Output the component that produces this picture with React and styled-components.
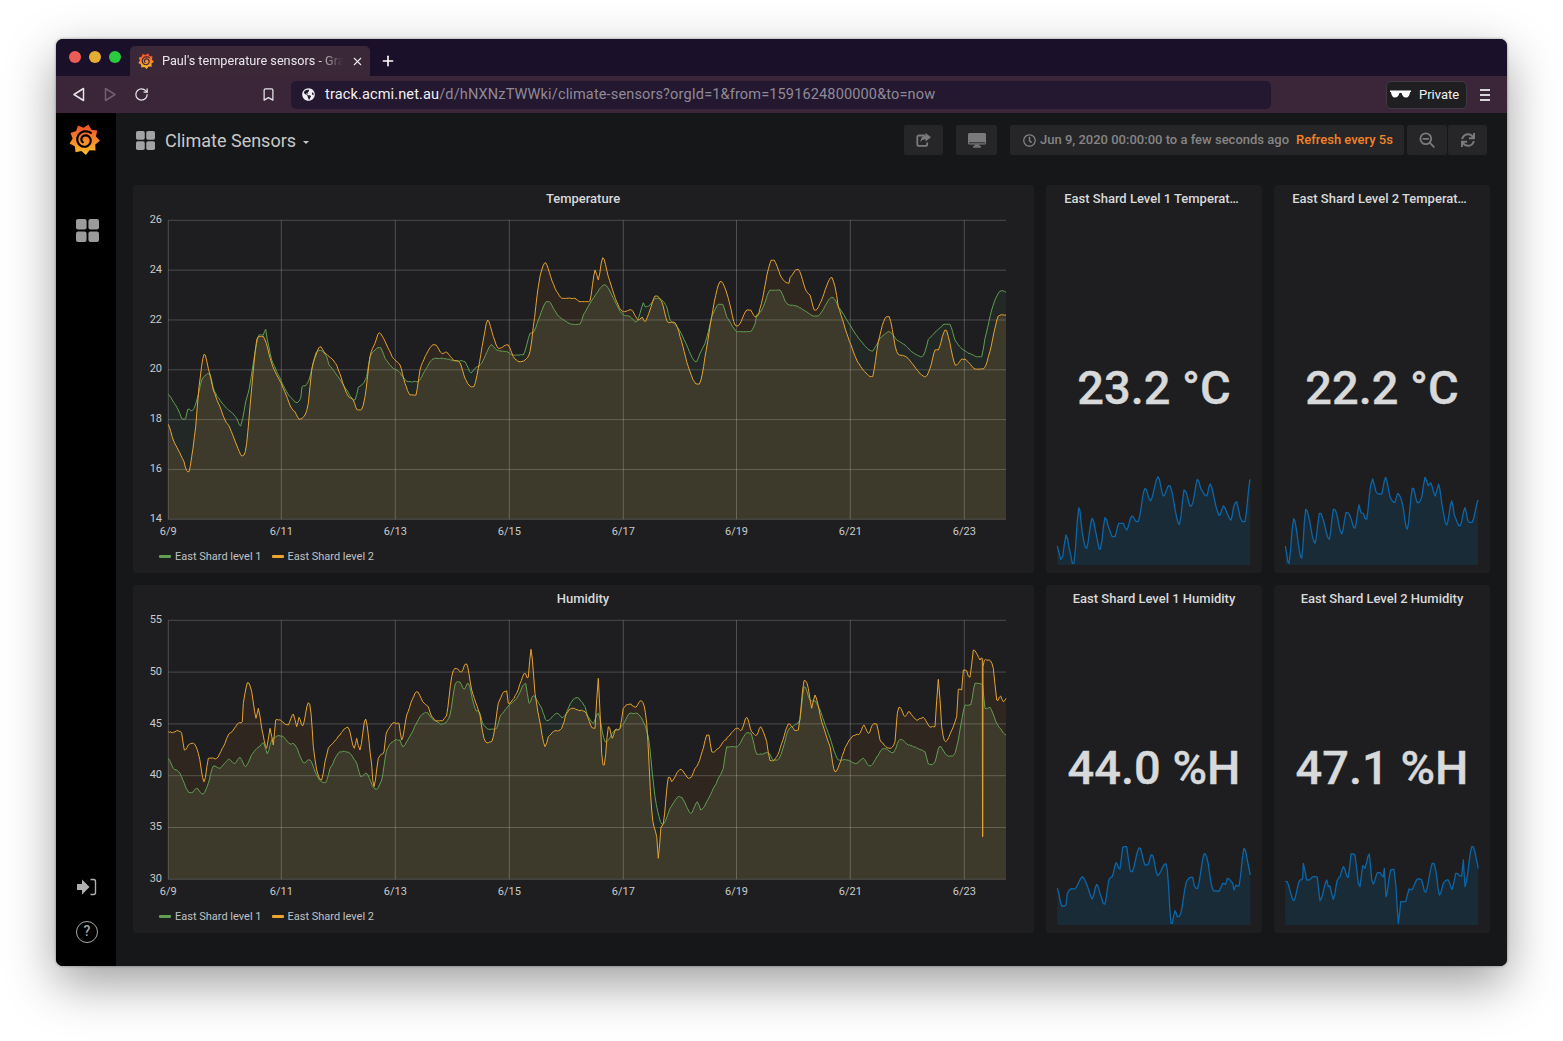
import React from 'react';
import styled, { createGlobalStyle } from 'styled-components';
import { FaGlobeAmericas, FaRegClock, FaSync } from 'react-icons/fa';
import { RotateCw, Bookmark, X, Plus } from 'lucide-react';

const Global = createGlobalStyle`
  html, body { margin: 0; padding: 0; background: #fff; width: 1563px; height: 1041px; overflow: hidden; }
  * { box-sizing: border-box; }
  body { font-family: Roboto, "Liberation Sans", sans-serif; }
`;

const tempGreen = ["115,643 130,665 145,690 157,717 167,716 173,688 187,692 197,672 207,635 215,600 225,587 240,581 250,625 262,650 285,680 305,697 320,715 332,738 338,715 347,665 358,625 368,560 380,490 388,464 400,465 407,448 412,480 425,540 440,575 470,635 490,660 502,668 512,655 516,620 525,618 537,600 547,560 558,518 575,512 590,530 597,555 620,585 650,630 675,660 685,622 695,615 710,590 720,530 735,510 752,503 765,535 790,565 805,573 825,598 835,605 865,605 880,580 905,540 925,535 940,535 975,542 1005,545 1015,565 1022,578 1035,565 1055,550 1070,518 1083,494 1100,510 1130,515 1150,525 1180,525 1190,495 1200,460 1210,458 1225,420 1245,370 1258,365 1270,385 1285,408 1310,425 1325,433 1350,433",
  "10,405 30,370 50,340 70,315 80,318 100,355 125,400 150,410 170,425 180,400 190,368 195,380 210,375 225,355 245,360 260,380 270,420 295,445 320,495 340,538 350,545 360,520 375,490 385,455 395,410 415,373 428,373 440,410 470,455 512,455 525,432 530,405 545,390 570,330 600,330 620,370 650,378 680,395 700,408 715,408 755,352 775,380 810,435 840,480 875,513 890,495 900,475 925,455 935,460 950,480 975,495 995,515 1025,530 1035,515 1045,478 1085,440 1092,433 1110,433 1125,480 1150,510 1180,525 1205,530 1215,475 1235,390 1255,340 1268,332 1278,337"];
const tempOrange = ["115,733 130,780 145,810 162,845 170,872 177,875 185,830 197,740 207,620 222,523 235,565 250,630 270,680 285,720 300,745 320,795 335,828 342,825 350,790 360,680 370,570 380,480 395,470 405,480 425,550 440,585 460,625 485,685 495,695 507,718 525,705 535,670 545,570 558,525 570,500 585,520 610,540 625,570 650,640 670,660 682,690 695,688 705,650 720,530 735,490 748,458 770,495 790,535 810,555 825,610 840,645 858,645 870,570 885,530 905,497 918,495 935,520 950,517 970,540 990,548 1005,595 1020,618 1032,620 1045,565 1060,480 1073,420 1090,470 1105,505 1135,495 1150,530 1167,545 1185,540 1200,515 1210,440 1225,320 1235,270 1247,248 1262,290 1275,325 1295,355 1310,355 1335,355 1350,365",
  "30,362 45,270 55,300 68,233 85,290 110,365 130,395 155,390 175,420 187,412 195,425 210,390 225,348 245,365 262,425 285,428 300,470 325,560 348,612 362,603 375,530 395,410 415,315 425,305 445,355 465,435 475,437 500,390 512,390 525,410 540,385 570,250 582,240 605,293 627,310 630,293 655,268 680,335 690,345 703,390 720,370 752,293 765,320 775,380 800,460 830,540 870,590 878,590 895,485 915,415 928,410 950,515 980,532 1033,590 1050,565 1065,510 1075,510 1095,450 1105,470 1122,545 1130,555 1145,537 1155,537 1185,567 1210,567 1225,530 1255,408 1278,405"];
const humGreen = ["115,475 130,505 150,520 172,570 185,578 200,565 220,582 235,550 250,498 270,505 295,478 315,490 330,472 347,500 368,460 385,442 402,430 412,462 425,420 455,408 480,432 495,435 520,488 540,480 560,525 575,545 587,548 600,505 630,455 660,460 680,490 692,530 710,520 735,567 755,540 770,450 795,420 810,420 818,440 850,390 870,350 890,338 905,355 940,372 960,345 975,255 990,246 1003,268 1015,250 1035,325 1048,335 1060,375 1080,388 1100,385 1110,350 1135,318 1160,295 1187,250 1197,310 1210,287 1235,325 1250,362 1280,340 1300,352 1325,305 1342,293 1350,300",
  "15,320 22,345 40,370 55,340 75,425 100,395 120,385 150,340 175,342 205,410 225,590 245,672 255,665 270,625 295,590 310,600 332,640 352,605 362,630 380,605 400,565 430,505 440,440 472,440 500,398 515,405 530,462 565,458 580,480 600,470 625,390 660,360 672,260 690,300 710,310 745,400 775,480 800,480 830,490 850,475 870,498 910,445 940,458 960,418 985,435 1035,455 1045,492 1065,485 1078,440 1100,465 1118,468 1130,440 1155,315 1172,315 1185,250 1208,256 1215,325 1230,322 1250,370 1278,405"];
const humOrange = ["115,395 130,397 140,392 155,400 163,450 175,435 190,430 205,460 222,545 235,475 260,475 285,430 295,405 310,390 325,370 337,365 340,310 352,248 365,275 378,355 385,325 395,385 410,445 420,385 430,435 437,360 475,375 490,342 500,380 507,352 518,378 535,308 543,340 550,440 560,510 575,540 585,485 595,445 630,405 655,383 673,445 680,415 690,450 707,357 725,495 732,560 745,475 762,455 768,403 785,372 807,370 815,420 830,345 860,275 878,305 895,320 905,350 925,362 950,345 965,230 975,205 995,215 1010,192 1025,270 1050,345 1062,415 1075,428 1090,410 1105,310 1130,272 1135,310 1160,280 1183,220 1195,232 1203,148 1215,280 1232,378 1245,440 1255,410 1270,395 1295,385 1310,340 1325,325 1350,332",
  "15,335 45,385 55,235 65,460 73,495 85,380 97,415 105,390 120,385 130,325 150,312 165,322 185,303 200,370 215,630 230,710 235,775 243,680 250,670 265,532 275,545 300,508 325,535 335,530 345,505 355,490 370,445 380,405 387,405 395,455 420,440 430,425 470,385 485,390 500,352 515,395 530,405 542,380 560,425 570,482 590,470 605,430 625,372 640,385 655,390 672,242 685,265 695,325 705,285 725,365 750,440 765,515 800,435 820,407 840,400 852,375 865,400 880,372 890,372 900,420 930,445 945,425 952,340 960,322 975,350 985,335 1010,360 1030,352 1045,375 1065,380 1075,238 1085,380 1097,425 1120,380 1130,350 1135,268 1145,270 1150,210 1160,212 1170,232 1180,150 1200,180 1207,175 1207.5,710 1208.5,710 1209,200 1228,180 1240,205 1250,300 1262,288 1270,305 1278,295"];

const spark1 = "52,318 62,358 68,350 78,285 92,345 102,370 116,203 127,280 140,325 156,235 170,290 181,328 195,233 205,260 217,290 225,290 236,250 250,250 260,270 275,228 295,245 314,146 332,182 354,110 370,168 390,137 418,254 432,150 438,155 450,198 458,190 472,118 482,145 500,168 511,132 532,212 540,225 550,198 573,240 580,205 590,185 600,230 615,245 630,118";
const spark2 = "736,318 747,370 761,236 785,355 797,208 825,310 838,220 848,235 868,298 880,208 888,215 905,282 918,218 930,228 945,265 957,195 963,218 970,220 980,238 992,135 998,117 1008,155 1025,162 1037,112 1050,170 1065,187 1073,160 1087,190 1102,268 1117,145 1132,188 1145,172 1155,112 1165,138 1172,128 1186,168 1196,133 1207,200 1220,255 1235,183 1243,225 1260,258 1275,203 1283,240 1297,247 1314,180";
const spark3 = "52,205 65,258 78,255 82,220 92,207 107,205 117,185 127,170 137,185 147,212 157,237 170,193 185,235 195,252 207,178 217,170 228,128 240,147 248,82 260,80 270,150 277,155 298,83 315,135 325,133 333,105 340,110 345,137 353,167 375,132 382,150 393,310 405,272 412,290 422,282 438,190 458,172 463,197 473,205 492,102 500,110 517,205 538,213 548,190 557,193 562,175 578,190 582,210 588,195 597,198 612,85 625,135 631,165";
const spark4 = "736,185 742,185 750,212 762,242 777,185 788,175 790,130 800,180 820,170 832,172 840,242 860,180 865,200 870,198 880,238 892,180 900,170 910,140 925,172 933,102 945,105 955,190 960,200 968,137 975,145 988,102 995,180 1000,192 1012,158 1020,158 1030,170 1033,145 1038,230 1045,190 1052,150 1062,148 1068,200 1075,310 1082,245 1097,245 1107,207 1115,210 1132,177 1145,180 1157,217 1177,130 1187,150 1198,225 1210,190 1225,180 1237,208 1247,160 1265,168 1270,120 1275,200 1295,80 1305,97 1315,145";

const toPage = (s, ox, oy) => s.split(' ').map(p => {
  const [x, y] = p.split(',').map(Number);
  return [ox + x / 3, oy + y / 3];
});
const ptStr = pts => pts.map(p => `${p[0].toFixed(1)},${p[1].toFixed(1)}`).join(' ');

// Rounds the traced points and adds a little sampling noise, as the real series has.
const densify = (pts, amp, seed) => {
  const out = [pts[0]];
  const noise = i => {
    const v = Math.sin((i + seed) * 12.9898) * 43758.5453;
    return (v - Math.floor(v) - 0.5) * 2 * amp;
  };
  let n = 0;
  for (let i = 0; i < pts.length - 1; i++) {
    const p0 = pts[Math.max(0, i - 1)];
    const p1 = pts[i];
    const p2 = pts[i + 1];
    const p3 = pts[Math.min(pts.length - 1, i + 2)];
    const steps = Math.max(1, Math.round((p2[0] - p1[0]) / 1.4));
    const lo = Math.min(p1[1], p2[1]);
    const hi = Math.max(p1[1], p2[1]);
    for (let s = 1; s <= steps; s++) {
      const t = s / steps;
      const t2 = t * t;
      const t3 = t2 * t;
      let y = 0.5 * (2 * p1[1] + (p2[1] - p0[1]) * t + (2 * p0[1] - 5 * p1[1] + 4 * p2[1] - p3[1]) * t2 + (3 * p1[1] - p0[1] - 3 * p2[1] + p3[1]) * t3);
      y = Math.min(hi, Math.max(lo, y));
      const x = p1[0] + (p2[0] - p1[0]) * t;
      out.push([x, s === steps ? y : y + noise(n++)]);
    }
  }
  return out;
};

const Page = styled.div`
  width: 1563px;
  height: 1041px;
  padding: 39px 56px 75px;
`;
const Window = styled.div`
  width: 1451px;
  height: 927px;
  display: flex;
  flex-direction: column;
  border-radius: 7px;
  overflow: hidden;
  background: #161719;
  box-shadow: 0 18px 50px rgba(0, 0, 0, 0.38), 0 0 3px rgba(0, 0, 0, 0.4);
`;
const TitleBar = styled.div`
  height: 37px;
  flex: none;
  background: #1a102a;
  display: flex;
  align-items: flex-end;
  padding-left: 13px;
`;
const Lights = styled.div`
  display: flex;
  gap: 8px;
  align-self: flex-start;
  margin-top: 12px;
  width: 61px;
`;
const Light = styled.span`
  width: 12px;
  height: 12px;
  border-radius: 50%;
  background: ${p => p.$c};
`;
const Tab = styled.div`
  width: 240px;
  height: 30px;
  background: #3a2738;
  border-radius: 5px 5px 0 0;
  display: flex;
  align-items: center;
  padding: 0 6px 0 8px;
  gap: 8px;
  color: #e8e6ea;
  font-size: 12.7px;
`;
const TabText = styled.span`
  flex: 1;
  white-space: nowrap;
  overflow: hidden;
  height: 18px;
  line-height: 18px;
  -webkit-mask-image: linear-gradient(to right, #000 86%, transparent 100%);
  mask-image: linear-gradient(to right, #000 86%, transparent 100%);
`;
const NewTab = styled.span`
  display: flex;
  margin: 0 0 7px 10px;
  color: #fff;
`;
const NavBar = styled.div`
  height: 37px;
  flex: none;
  background: #3a2638;
  display: flex;
  align-items: center;
  padding: 0 0 0 16px;
  color: #e6e3e8;
`;
const NavIcon = styled.span`
  display: flex;
  width: ${p => p.$w}px;
  color: ${p => p.$c || '#e6e3e8'};
`;
const AddressBar = styled.div`
  width: 980px;
  height: 28px;
  border-radius: 5px;
  background: #241730;
  display: flex;
  align-items: center;
  padding-left: 11px;
  gap: 10px;
  font-size: 14.55px;
  color: #8f8a97;
  margin-right: 115px;
  letter-spacing: 0.125px;
`;
const Host = styled.span`
  color: #f1eff3;
`;
const PrivatePill = styled.div`
  width: 81px;
  height: 28px;
  background: #1f1f22;
  border: 1px solid #3f3a42;
  border-radius: 5px;
  display: flex;
  align-items: center;
  padding-left: 3px;
  gap: 8px;
  color: #f1f1f1;
  font-size: 13px;
  margin-right: 13px;
`;
const Burger = styled.div`
  display: flex;
  flex-direction: column;
  gap: 3px;
  width: 10px;
  span { height: 2px; background: #d8d4da; display: block; }
`;
const Body = styled.div`
  flex: 1;
  display: flex;
  min-height: 0;
`;
const Sidebar = styled.nav`
  width: 60px;
  flex: none;
  background: #000;
  display: flex;
  flex-direction: column;
  align-items: center;
  padding: 11px 0 23px;
  color: #9a9a9a;
`;
const LogoSlot = styled.div`
  margin: 0 3px 0 0;
  display: flex;
  height: 32px;
`;
const SideGrid = styled.div`
  margin: 63px 0 0 2px;
  display: flex;
`;
const SideBottom = styled.div`
  margin: auto 0 0 2px;
  display: flex;
  flex-direction: column;
  align-items: center;
  gap: 25px;
`;
const Help = styled.div`
  width: 22px;
  height: 22px;
  border-radius: 50%;
  border: 1.5px solid #a8a8a8;
  color: #a8a8a8;
  font-size: 14px;
  font-weight: 500;
  line-height: 19px;
  text-align: center;
`;
const Main = styled.main`
  flex: 1;
  padding: 12px 17px 0;
  background: #161719;
`;
const Header = styled.header`
  height: 30px;
  margin-bottom: 30px;
  padding: 0 3px;
  display: flex;
  align-items: center;
`;
const DashTitle = styled.div`
  display: flex;
  align-items: center;
  font-size: 18px;
  color: #c8c8c8;
  gap: 10px;
  margin-right: auto;
`;
const Caret = styled.span`
  width: 0;
  height: 0;
  border-left: 3.5px solid transparent;
  border-right: 3.5px solid transparent;
  border-top: 3.5px solid #c8c8c8;
  margin: 5px 0 0 -3px;
`;
const ToolBtn = styled.div`
  width: ${p => p.$w}px;
  height: 30px;
  margin-left: ${p => p.$gap}px;
  background: #262628;
  border-radius: 2px;
  display: flex;
  align-items: center;
  justify-content: center;
  color: #7a7a7a;
`;
const TimeBtn = styled(ToolBtn)`
  justify-content: flex-start;
  padding: 0 0 2px 13px;
  gap: 4px;
  font-size: 13px;
  font-weight: 500;
  color: #858585;
  white-space: nowrap;
  svg { margin-top: 2px; }
`;
const Refresh = styled.span`
  color: #f2832b;
  margin-left: 3px;
`;
const Grid = styled.div`
  display: grid;
  grid-template-columns: 901px 216px 216px;
  grid-template-rows: 388px 348px;
  gap: 12px;
`;
const Panel = styled.section`
  position: relative;
  background: #1e1e20;
  border-radius: 3px;
  display: flex;
  flex-direction: column;
`;
const PanelTitle = styled.h2`
  margin: 0;
  height: 28px;
  flex: none;
  line-height: 28px;
  text-align: center;
  font-size: 13px;
  font-weight: 500;
  color: #d8d9da;
  padding-right: ${p => p.$shift || 0}px;
`;
const Plot = styled.svg`
  display: block;
  flex: none;
  font-family: Roboto, "Liberation Sans", sans-serif;
`;
const Legend = styled.div`
  display: flex;
  height: 22px;
  align-items: center;
  padding-left: 26px;
  gap: 10px;
  font-size: 11px;
  color: #c0c1c3;
  margin-top: 2px;
`;
const LegendItem = styled.span`
  display: flex;
  align-items: center;
  gap: 4px;
  &::before {
    content: '';
    width: 12px;
    height: 3px;
    border-radius: 1px;
    background: ${p => p.$c};
  }
`;
const StatValue = styled.div`
  flex: 1;
  display: flex;
  align-items: center;
  justify-content: center;
  padding-bottom: 12px;
  font-size: 47px;
  font-weight: 500;
  -webkit-text-stroke: 0.4px #d8d9da;
  color: #d8d9da;
  white-space: nowrap;
`;
const Spark = styled.svg`
  position: absolute;
  left: 11px;
  bottom: 8px;
  overflow: visible;
`;

function GrafanaLogo({ size, id, swirl }) {
  const teeth = 9;
  const pts = [];
  for (let i = 0; i < teeth * 2; i++) {
    const a = (i / (teeth * 2)) * Math.PI * 2 - Math.PI / 2.4;
    const r = i % 2 === 0 ? 15 : 11.5;
    pts.push(`${(15 + r * Math.cos(a)).toFixed(2)},${(15 + r * Math.sin(a)).toFixed(2)}`);
  }
  let spiral = '';
  for (let t = 0; t <= 1; t += 0.03) {
    const a = Math.PI * 0.75 + t * Math.PI * 3;
    const r = 3 + t * 6;
    spiral += `${t === 0 ? 'M' : 'L'}${(15.5 + r * Math.cos(a)).toFixed(2)} ${(15.5 + r * Math.sin(a)).toFixed(2)} `;
  }
  return (
    <svg width={size} height={size} viewBox="0 0 30 30">
      <defs>
        <linearGradient id={id} x1="0" y1="0" x2="0" y2="1">
          <stop offset="0" stopColor="#ef4a2b" />
          <stop offset="1" stopColor="#fcc02c" />
        </linearGradient>
      </defs>
      <polygon points={pts.join(' ')} fill={`url(#${id})`} />
      <path d={spiral} fill="none" stroke={swirl} strokeWidth="2.1" strokeLinecap="round" />
    </svg>
  );
}

function Squares({ size, color }) {
  const g = size * 0.08;
  const s = (size - g) / 2;
  const r = size * 0.09;
  return (
    <svg width={size} height={size} viewBox={`0 0 ${size} ${size}`} fill={color}>
      <rect x="0" y="0" width={s} height={s} rx={r} />
      <rect x={s + g} y="0" width={s} height={s} rx={r} />
      <rect x="0" y={s + g} width={s} height={s} rx={r} />
      <rect x={s + g} y={s + g} width={s} height={s} rx={r} />
    </svg>
  );
}

function SignIn() {
  return (
    <svg width="20" height="18" viewBox="0 0 20 18">
      <path d="M0 6h5V1.500L12.500 9 5 16.500V12H0z" fill="#b0b0b0" />
      <path d="M13.500 1.500h3c1.100 0 2 .9 2 2v11c0 1.100-.9 2-2 2h-3" fill="none" stroke="#b0b0b0" strokeWidth="1.400" />
    </svg>
  );
}

function ShareIcon() {
  return (
    <svg width="15" height="14" viewBox="0 0 15 14">
      <path d="M9 2.500H3c-1 0-1.700.7-1.700 1.700v7c0 1 .7 1.700 1.700 1.700h6.500c1 0 1.700-.7 1.700-1.700V9.500" fill="none" stroke="currentColor" strokeWidth="1.800" />
      <path d="M9.500 0 15 4.300 9.500 8.600V6.200C7 6.200 5.300 7.300 4.600 9.500 4.400 5.400 6.300 2.800 9.500 2.500z" fill="currentColor" />
    </svg>
  );
}

function DesktopIcon() {
  return (
    <svg width="18" height="15" viewBox="0 0 18 15" fill="currentColor">
      <path d="M1.500 0h15c.8 0 1.500.7 1.500 1.500V10c0 .8-.7 1.500-1.500 1.500h-15C.7 11.500 0 10.800 0 10V1.500C0 .7.7 0 1.500 0z" />
      <rect x="1" y="9.300" width="16" height="1" fill="#262628" />
      <rect x="6.500" y="11.500" width="5" height="1.700" />
      <rect x="5" y="13.200" width="8" height="1.500" />
    </svg>
  );
}

function ZoomOutIcon() {
  return (
    <svg width="16" height="16" viewBox="0 0 16 16" fill="none" stroke="currentColor" strokeWidth="1.800" strokeLinecap="round">
      <circle cx="6.800" cy="6.800" r="5.400" />
      <path d="M4.300 6.800h5M10.900 10.900 14.800 14.800" />
    </svg>
  );
}

function Chart({ top, height, yMin, yMax, plotTop, plotBottom, ticks, green, orange, id, amp }) {
  const L = 168.3, R = 1006;
  const xTicks = [[168.3, '6/9'], [281.3, '6/11'], [395.3, '6/13'], [509.3, '6/15'], [623.3, '6/17'], [736.5, '6/19'], [850.3, '6/21'], [964.3, '6/23']];
  const ys = ticks.map(v => [plotBottom - (v - yMin) / (yMax - yMin) * (plotBottom - plotTop), v]);
  const oy = top === 213 ? 180 : 600;
  const g = densify([...toPage(green[0], 130, oy), ...toPage(green[1], 580, oy)], amp, 3);
  const o = densify([...toPage(orange[0], 130, oy), ...toPage(orange[1], 580, oy)], amp * 1.2, 11);
  const close = pts => `${ptStr(pts)} ${R},${plotBottom} ${L},${plotBottom}`;
  return (
    <Plot width="901" height={height} viewBox={`133 ${top} 901 ${height}`}>
      <defs>
        <clipPath id={id}><polygon points={close(g)} /></clipPath>
      </defs>
      <polygon points={close(g)} fill="#222825" />
      <polygon points={close(o)} fill="#2f2620" />
      <polygon points={close(o)} fill="#3d3a2c" clipPath={`url(#${id})`} />
      {ys.map(([y, v]) => (
        <line key={v} x1={L} x2={R} y1={y} y2={y} stroke="#fff" strokeOpacity="0.2" />
      ))}
      {xTicks.map(([x]) => (
        <line key={x} x1={x} x2={x} y1={plotTop} y2={plotBottom} stroke="#fff" strokeOpacity="0.22" />
      ))}
      {ys.map(([y, v]) => (
        <text key={v} x="162" y={y + 2.6} textAnchor="end" fontSize="11" fill="#c9cacc">{v}</text>
      ))}
      {xTicks.map(([x, t]) => (
        <text key={t} x={x} y={plotBottom + 16} textAnchor="middle" fontSize="11" fill="#c9cacc">{t}</text>
      ))}
      <polyline points={ptStr(g)} fill="none" stroke="#629e51" strokeWidth="1" strokeLinejoin="round" />
      <polyline points={ptStr(o)} fill="none" stroke="#e5a332" strokeWidth="1" strokeLinejoin="round" />
    </Plot>
  );
}

function Sparkline({ data, x0, y0 }) {
  const W = 193, H = 100;
  const pts = densify(toPage(data, -x0, -y0), 0, 1).map(([x, y]) => [x, y + H]);
  return (
    <Spark width={W} height={H} viewBox={`0 0 ${W} ${H}`}>
      <polygon points={`${pts[0][0]},${H} ${ptStr(pts)} ${pts[pts.length - 1][0]},${H}`} fill="#1a2b38" />
      <polyline points={ptStr(pts)} fill="none" stroke="#0a66a8" strokeWidth="1.3" strokeLinejoin="round" />
    </Spark>
  );
}

function Stat({ title, shift, value, data, x0, y0 }) {
  return (
    <Panel>
      <PanelTitle $shift={shift}>{title}</PanelTitle>
      <StatValue>{value}</StatValue>
      <Sparkline data={data} x0={x0} y0={y0} />
    </Panel>
  );
}

export default function App() {
  return (
    <Page>
      <Global />
      <Window>
        <TitleBar>
          <Lights>
            <Light $c="#ed5b55" />
            <Light $c="#e5ad34" />
            <Light $c="#2bc840" />
          </Lights>
          <Tab>
            <GrafanaLogo size={16} id="lgTab" swirl="#3a2738" />
            <TabText>Paul's temperature sensors - Grafana</TabText>
            <X size={13} strokeWidth={2} />
          </Tab>
          <NewTab><Plus size={16} strokeWidth={2.4} /></NewTab>
        </TitleBar>
        <NavBar>
          <NavIcon $w={31}>
            <svg width="14" height="15" viewBox="0 0 14 15" fill="none" stroke="currentColor" strokeWidth="1.500" strokeLinejoin="round"><path d="M11.500 1.500v12L2 7.500z" /></svg>
          </NavIcon>
          <NavIcon $w={31} $c="#6f5f6e">
            <svg width="14" height="15" viewBox="0 0 14 15" fill="none" stroke="currentColor" strokeWidth="1.500" strokeLinejoin="round"><path d="M2.500 1.500v12L12 7.500z" /></svg>
          </NavIcon>
          <NavIcon $w={127}><RotateCw size={15} strokeWidth={2} /></NavIcon>
          <NavIcon $w={30}><Bookmark size={15} strokeWidth={2} /></NavIcon>
          <AddressBar>
            <FaGlobeAmericas size={13} color="#f1eff3" />
            <span><Host>track.acmi.net.au</Host>/d/hNXNzTWWki/climate-sensors?orgId=1&amp;from=1591624800000&amp;to=now</span>
          </AddressBar>
          <PrivatePill>
            <svg width="21" height="9" viewBox="0 0 21 9" fill="#fff"><path d="M0 .5h21v1.300l-1 .4c-.3 3-1.600 5.300-4 5.300-2.600 0-3.700-2-4.300-4.300-.4-.7-2-.7-2.400 0C8.700 5.500 7.600 7.500 5 7.500c-2.400 0-3.700-2.300-4-5.300l-1-.4z" /></svg>
            <span>Private</span>
          </PrivatePill>
          <Burger><span /><span /><span /></Burger>
        </NavBar>
        <Body>
          <Sidebar>
            <LogoSlot><GrafanaLogo size={31} id="lgSide" swirl="#000" /></LogoSlot>
            <SideGrid><Squares size={23} color="#9b9b9b" /></SideGrid>
            <SideBottom>
              <SignIn />
              <Help>?</Help>
            </SideBottom>
          </Sidebar>
          <Main>
            <Header>
              <DashTitle>
                <Squares size={19} color="#a3a3a3" />
                <span>Climate Sensors</span>
                <Caret />
              </DashTitle>
              <ToolBtn $w={39} $gap={0}><ShareIcon /></ToolBtn>
              <ToolBtn $w={41} $gap={13}><DesktopIcon /></ToolBtn>
              <TimeBtn $w={394} $gap={13}>
                <FaRegClock size={13} />
                <span>Jun 9, 2020 00:00:00 to a few seconds ago</span>
                <Refresh>Refresh every 5s</Refresh>
              </TimeBtn>
              <ToolBtn $w={40} $gap={3}><ZoomOutIcon /></ToolBtn>
              <ToolBtn $w={39} $gap={1}><FaSync size={14} /></ToolBtn>
            </Header>
            <Grid>
              <Panel>
                <PanelTitle $shift={1}>Temperature</PanelTitle>
                <Chart id="clipT" amp={0.3} top={213} height={330} yMin={14} yMax={26} plotTop={220.3} plotBottom={519.3} ticks={[14, 16, 18, 20, 22, 24, 26]} green={tempGreen} orange={tempOrange} />
                <Legend>
                  <LegendItem $c="#629e51">East Shard level 1</LegendItem>
                  <LegendItem $c="#eaa42f">East Shard level 2</LegendItem>
                </Legend>
              </Panel>
              <Stat title="East Shard Level 1 Temperat…" shift={5} value="23.2 °C" data={spark1} x0={-1040 + 1057} y0={-440 + 565} />
              <Stat title="East Shard Level 2 Temperat…" shift={5} value="22.2 °C" data={spark2} x0={-1040 + 1285} y0={-440 + 565} />
              <Panel>
                <PanelTitle $shift={1}>Humidity</PanelTitle>
                <Chart id="clipH" amp={0.55} top={613} height={290} yMin={30} yMax={55} plotTop={620.3} plotBottom={879.3} ticks={[30, 35, 40, 45, 50, 55]} green={humGreen} orange={humOrange} />
                <Legend>
                  <LegendItem $c="#629e51">East Shard level 1</LegendItem>
                  <LegendItem $c="#eaa42f">East Shard level 2</LegendItem>
                </Legend>
              </Panel>
              <Stat title="East Shard Level 1 Humidity" value="44.0 %H" data={spark3} x0={-1040 + 1057} y0={-820 + 925} />
              <Stat title="East Shard Level 2 Humidity" value="47.1 %H" data={spark4} x0={-1040 + 1285} y0={-820 + 925} />
            </Grid>
          </Main>
        </Body>
      </Window>
    </Page>
  );
}
